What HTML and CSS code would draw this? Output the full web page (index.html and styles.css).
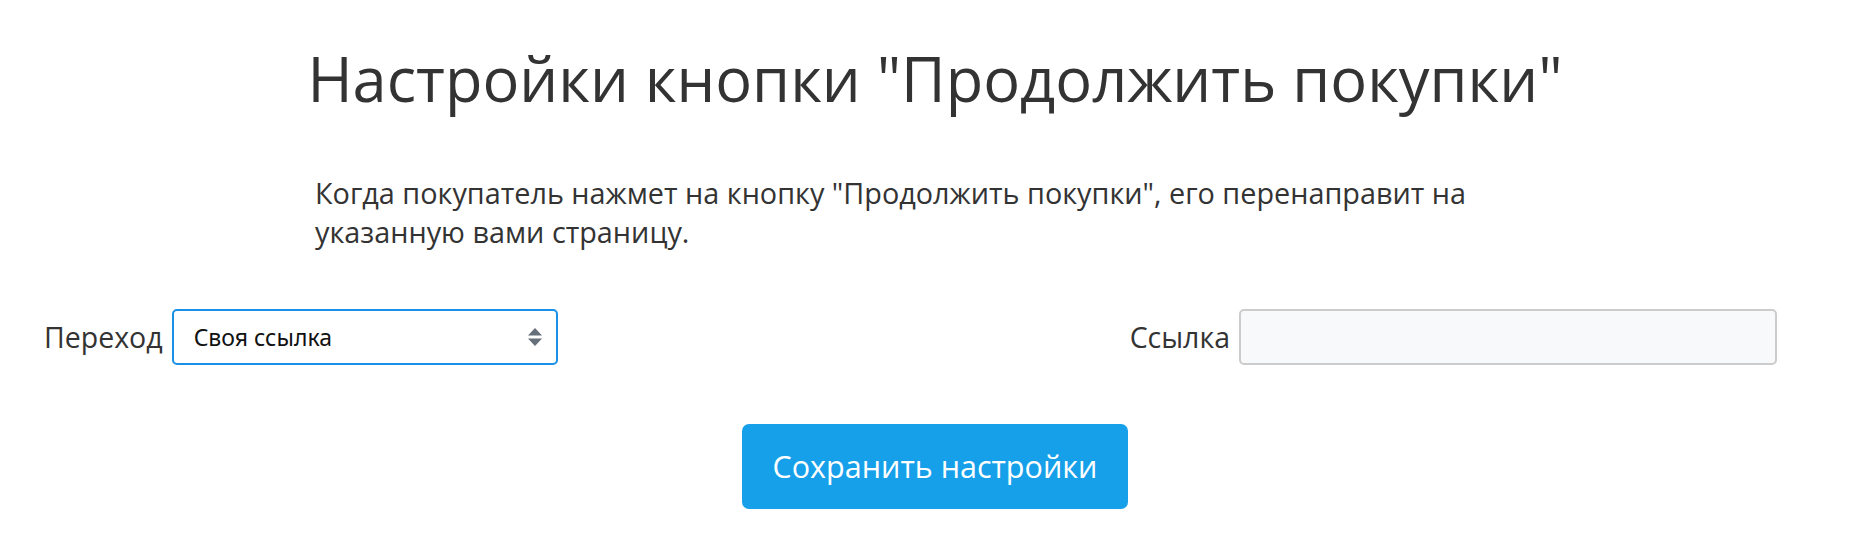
FILE: index.html
```html
<!DOCTYPE html>
<html lang="ru">
<head>
<meta charset="utf-8">
<title>Настройки кнопки</title>
<link rel="stylesheet" href="styles.css">
</head>
<body>
<div class="page">
  <h1 class="title">Настройки кнопки "Продолжить покупки"</h1>
  <p class="lead">Когда покупатель нажмет на кнопку "Продолжить покупки", его перенаправит на указанную вами страницу.</p>
  <div class="form-row">
    <div class="field field-left">
      <label class="label">Переход</label>
      <div class="select">
        <span class="select-value">Своя ссылка</span>
        <svg class="select-arrows" width="14" height="18" viewBox="0 0 14 18"><path d="M7 0 L14 7.5 L0 7.5 Z" fill="#66707a"/><path d="M0 10.5 L14 10.5 L7 18 Z" fill="#66707a"/></svg>
      </div>
    </div>
    <div class="field field-right">
      <label class="label">Ссылка</label>
      <div class="input"></div>
    </div>
  </div>
  <div class="actions">
    <button class="btn">Сохранить настройки</button>
  </div>
</div>
</body>
</html>
```

FILE: styles.css
```css
html, body {
  margin: 0;
  padding: 0;
  background: #fff;
}
body {
  font-family: "Open Sans", "Noto Sans", sans-serif;
  color: #333;
}
.page {
  padding-left: 20px;
  display: flex;
  flex-direction: column;
}
.title {
  margin: 0;
  padding-top: 42px;
  font-size: 61.3px;
  font-weight: 400;
  line-height: 1.2;
  text-align: center;
  color: #333;
}
.lead {
  margin: 57px auto 0;
  width: 1240px;
  font-size: 28.8px;
  line-height: 39px;
  color: #333;
}
.form-row {
  margin-top: 58px;
  display: flex;
  align-items: center;
  padding: 0 73px 0 24px;
}
.field {
  display: flex;
  align-items: center;
}
.field-right {
  margin-left: auto;
}
.label {
  font-size: 28.5px;
  color: #333;
}
.field-left .label {
  margin-right: 9px;
}
.field-right .label {
  margin-right: 9px;
}
.select {
  box-sizing: border-box;
  width: 386px;
  height: 56px;
  border: 2px solid #1a91e6;
  border-radius: 5px;
  display: flex;
  align-items: center;
  justify-content: space-between;
  padding: 0 14px 0 20px;
  background: #fff;
}
.select-value {
  font-family: "Noto Sans", "Open Sans", sans-serif;
  font-size: 23px;
  color: #111;
}
.input {
  box-sizing: border-box;
  width: 538px;
  height: 56px;
  border: 2px solid #ccc;
  border-radius: 5px;
  background: #f8f9fa;
}
.actions {
  margin-top: 59px;
  display: flex;
  justify-content: center;
}
.btn {
  width: 386px;
  height: 85px;
  border: none;
  border-radius: 7px;
  background: #16a0ea;
  color: #fff;
  font-family: "Open Sans", "Noto Sans", sans-serif;
  font-size: 30.5px;
  padding: 0;
}
```
